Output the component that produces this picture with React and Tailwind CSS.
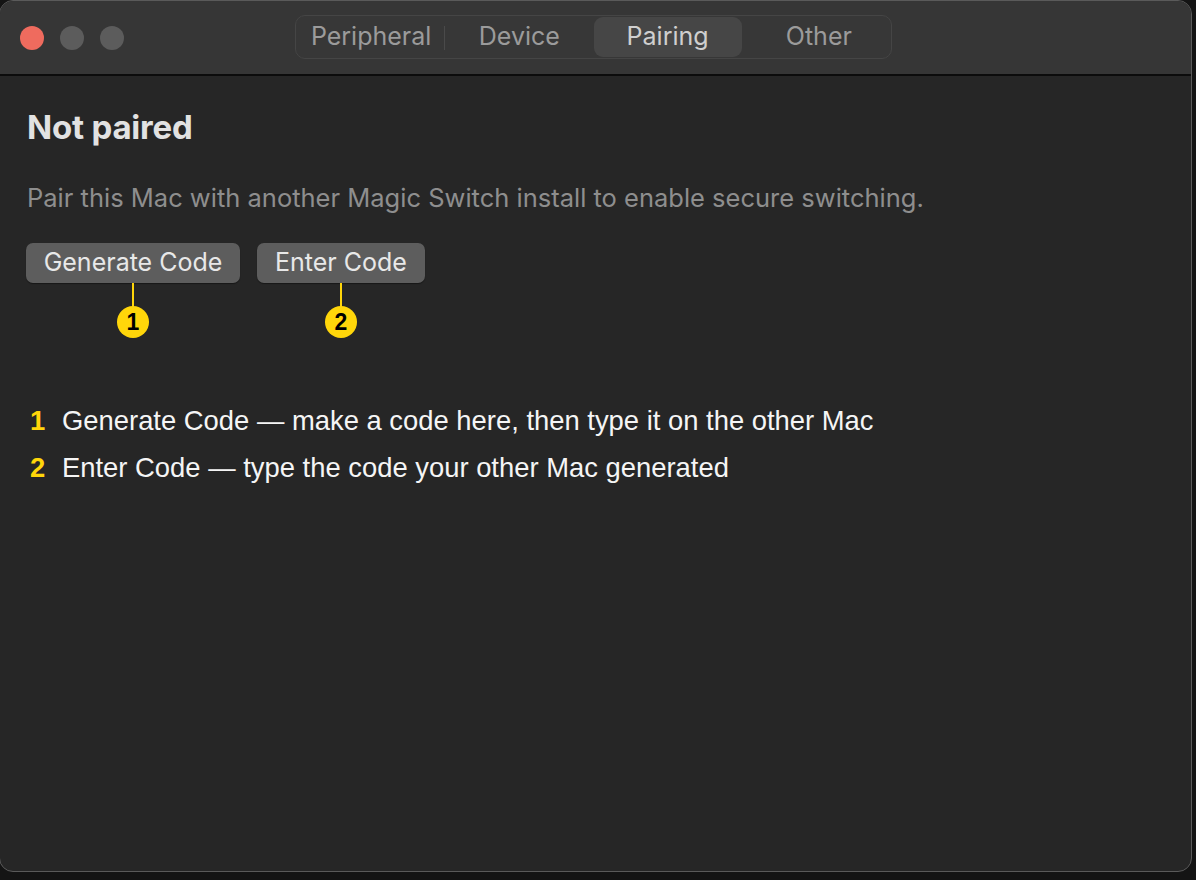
import React from "react";

const sf = { fontFamily: "Inter, 'Noto Sans', sans-serif" };

function Callout({ n }) {
  return (
    <div className="absolute left-1/2 top-full flex -translate-x-1/2 flex-col items-center">
      <div className="h-[24px] w-[2px] bg-[#ffd60a]" />
      <div className="-mt-[1px] flex h-[32px] w-[32px] items-center justify-center rounded-full bg-[#ffd60a] text-[23px] font-bold leading-none text-black" style={{ fontFamily: "'Liberation Sans', Arial, sans-serif" }}>
        {n}
      </div>
    </div>
  );
}

export default function App() {
  const tabs = ["Peripheral", "Device", "Pairing", "Other"];
  return (
    <div className="h-[880px] w-[1196px] overflow-hidden bg-[#141414]" style={sf}>
      <div className="-ml-[1px] flex h-[872px] w-[1193px] flex-col overflow-hidden rounded-[14px] border border-[#5a5a5a] bg-[#262626]">
        <div className="flex h-[75px] shrink-0 items-center border-b-2 border-[#0c0c0c] bg-[#363636]">
          <div className="flex gap-[16px] pl-[20px]">
            <div className="h-[24px] w-[24px] rounded-full bg-[#ef6b5e]" />
            <div className="h-[24px] w-[24px] rounded-full bg-[#5c5c5c]" />
            <div className="h-[24px] w-[24px] rounded-full bg-[#5c5c5c]" />
          </div>
          <div className="ml-[171px] mt-[-1px] flex h-[44px] w-[597px] items-center rounded-[10px] border border-[#454545] bg-[#373737] p-[1px]">
            {tabs.map((t, i) => (
              <div key={t} className="relative flex h-full flex-1 items-center justify-center">
                {i === 0 && <div className="absolute right-0 top-[9px] h-[24px] w-[1px] bg-[#4a4a4a]" />}
                <div className={"flex h-full w-full items-center justify-center rounded-[9px] text-[25px] " + (t === "Pairing" ? "bg-[#464646] text-[#cfcfcf]" : t === "Other" ? "pl-[6px] text-[#9b9b9b]" : "text-[#9b9b9b]")}>
                  {t}
                </div>
              </div>
            ))}
          </div>
        </div>
        <div className="flex flex-col px-[27px]">
          <div className="mt-[31px] text-[33px] font-bold leading-[40px] tracking-[-0.2px] text-[#e2e2e2]">Not paired</div>
          <div className="mt-[36px] text-[25.5px] leading-[30px] text-[#8e8e8e]">
            Pair this Mac with another Magic Switch install to enable secure switching.
          </div>
          <div className="mt-[30px] -ml-[1px] flex gap-[17px]">
            <div className="relative flex h-[40px] w-[214px] items-center justify-center rounded-[7px] bg-[#5d5d5d] text-[25px] text-[#e8e8e8] shadow-[0_1px_1px_rgba(0,0,0,0.4)]">
              Generate Code
              <Callout n="1" />
            </div>
            <div className="relative flex h-[40px] w-[168px] items-center justify-center rounded-[7px] bg-[#5d5d5d] text-[25px] text-[#e8e8e8] shadow-[0_1px_1px_rgba(0,0,0,0.4)]">
              Enter Code
              <Callout n="2" />
            </div>
          </div>
          <div className="mt-[122px] flex flex-col gap-[16px] pl-[3px] text-[27.4px] leading-[31px] text-[#f5f5f5]" style={{ fontFamily: "'Liberation Sans', Arial, sans-serif" }}>
            <div className="flex">
              <span className="w-[32px] font-bold text-[#ffd60a]">1</span>
              <span>Generate Code — make a code here, then type it on the other Mac</span>
            </div>
            <div className="flex">
              <span className="w-[32px] font-bold text-[#ffd60a]">2</span>
              <span>Enter Code — type the code your other Mac generated</span>
            </div>
          </div>
        </div>
      </div>
    </div>
  );
}
